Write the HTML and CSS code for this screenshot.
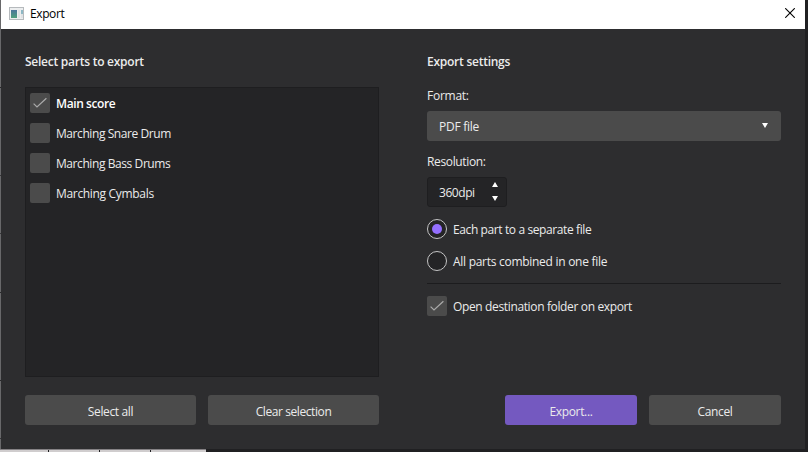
FILE: index.html
```html
<!DOCTYPE html>
<html lang="en">
<head>
<meta charset="utf-8">
<title>Export</title>
<link rel="stylesheet" href="styles.css">
</head>
<body>
<main class="dialog">
  <header class="titlebar">
    <svg class="app-icon" width="15" height="13" viewBox="0 0 15 13">
      <defs><linearGradient id="pane" x1="0" y1="0" x2="0" y2="1"><stop offset="0" stop-color="#4b759b"/><stop offset="1" stop-color="#4fa17c"/></linearGradient></defs>
      <rect x=".5" y=".5" width="14" height="12" fill="#eceeef" stroke="#b6babd"/>
      <rect x="2" y="3" width="6" height="8" fill="url(#pane)"/>
      <rect x="9" y="3" width="2" height="8" fill="#dfe2e4"/>
      <rect x="12" y="3" width="2" height="4" fill="#8db8c5"/>
      <rect x="12" y="7" width="2" height="4" fill="#dfe2e4"/>
    </svg>
    <span class="title">Export</span>
    <svg class="close" width="10" height="10" viewBox="0 0 10 10"><path d="M.2 .2 9.8 9.8M9.8 .2.2 9.8" stroke="#000" stroke-width="1.1"/></svg>
  </header>
  <div class="content">
    <section class="parts">
      <h2 class="parts-heading">Select parts to export</h2>
      <ul class="list">
        <li class="row"><span class="check"><svg width="20" height="20" viewBox="0 0 20 20"><path d="M3.6 10.6 7 14 16.4 5.2"/></svg></span><b class="text main-score">Main score</b></li>
        <li class="row"><span class="check"></span><span class="text tight">Marching Snare Drum</span></li>
        <li class="row"><span class="check"></span><span class="text tight">Marching Bass Drums</span></li>
        <li class="row"><span class="check"></span><span class="text cymbals">Marching Cymbals</span></li>
      </ul>
      <div class="buttons">
        <button class="btn wide"><span class="t-all">Select all</span></button>
        <button class="btn wide"><span class="t-clear">Clear selection</span></button>
      </div>
    </section>
    <section class="settings">
      <h2 class="settings-heading">Export settings</h2>
      <label class="label format">Format:</label>
      <div class="select"><span class="t-pdf">PDF file</span><svg width="6" height="5" viewBox="0 0 6 5"><path d="M0 0h6L3 5z"/></svg></div>
      <label class="label resolution">Resolution:</label>
      <div class="spin"><span class="t-dpi">360dpi</span><span class="arrows"><svg width="6" height="5" viewBox="0 0 6 5"><path d="M0 5h6L3 0z"/></svg><svg width="6" height="5" viewBox="0 0 6 5"><path d="M0 0h6L3 5z"/></svg></span></div>
      <div class="option"><span class="radio on"></span><span class="text t-each">Each part to a separate file</span></div>
      <div class="option second"><span class="radio"></span><span class="text t-combined">All parts combined in one file</span></div>
      <hr>
      <div class="option"><span class="check"><svg width="20" height="20" viewBox="0 0 20 20"><path d="M3.6 10.6 7 14 16.4 5.2"/></svg></span><span class="text t-open">Open destination folder on export</span></div>
      <div class="buttons right">
        <button class="btn primary"><span class="t-export">Export...</span></button>
        <button class="btn"><span class="t-cancel">Cancel</span></button>
      </div>
    </section>
  </div>
</main>
<footer class="behind"><i></i><i></i><i></i><i></i></footer>
</body>
</html>
```
FILE: styles.css
```css
* { box-sizing: border-box; }
body {
  margin: 0; width: 808px; height: 452px; overflow: hidden;
  background:
    linear-gradient(#68686a 0 87px, #29292b 87px 88px, #68686a 88px 175px, #38383a 175px 176px, #68686a 176px 233px, #38383a 233px 234px, #68686a 234px 292px, #29292b 292px 293px, #68686a 293px 380px, #29292b 380px 381px, #68686a 381px 438px, #38383a 438px 439px, #68686a 439px) 0 0 / 1px 100% no-repeat,
    #202022;
  font: 12px/20px "Open Sans", "Noto Sans", sans-serif; letter-spacing: -.25px; color: #ebebeb;
}
.dialog { width: 804px; height: 449px; margin-left: 1px; background: #2d2d2f; }
.titlebar { height: 29px; background: #fff; color: #000; display: flex; align-items: center; padding: 0 10px 3px 8px; }
.title { margin-left: 6px; padding-top: 2px; letter-spacing: -.4px; }
.close { margin-left: auto; }
.content { display: flex; gap: 48px; padding: 23px 24px 24px; height: 420px; }
.parts, .settings { width: 354px; display: flex; flex-direction: column; }
h2 { margin: 0; font-size: 12px; line-height: 20px; font-weight: 600; align-self: flex-start; }
.list { list-style: none; margin: 15px 0 0; padding: 5px 4px; height: 290px; border: 1px solid #1e1e20; background: #242426; }
.row, .option { display: flex; align-items: center; gap: 6px; height: 20px; }
.row { margin-bottom: 10px; }
.text { padding-top: 2px; }
b { font-weight: 600; color: #fff; }
.main-score { letter-spacing: -.4px; }
.tight { letter-spacing: -.42px; }
.cymbals { letter-spacing: -.32px; }
.t-all { letter-spacing: -.35px; }
.t-clear { letter-spacing: -.41px; }
.t-dpi { letter-spacing: -.45px; }
.t-each { letter-spacing: -.39px; }
.t-combined { letter-spacing: -.28px; }
.t-open { letter-spacing: -.36px; }
.t-export, .t-cancel { letter-spacing: -.35px; }
.check { width: 20px; height: 20px; border-radius: 2px; background: #4b4b4b; flex: none; }
.check svg { display: block; }
.check path { fill: none; stroke: #aaa; stroke-width: 1.2; }
.buttons { display: flex; gap: 12px; margin-top: 18px; }
.btn { width: 132px; height: 30px; border: 0; border-radius: 3px; background: #4b4b4b; color: #ebebeb; font: inherit; letter-spacing: inherit; padding: 3px 0 0; }
.btn.wide { width: 171px; }
.btn.primary { background: #7459c0; }
.label { align-self: flex-start; height: 20px; }
.format { margin-top: 14px; }
.select { height: 30px; margin-top: 5px; padding: 0 13px 0 12px; border-radius: 3px; background: #4b4b4b; display: flex; justify-content: space-between; align-items: center; }
.t-pdf { padding-top: 2px; }
.select svg { margin-bottom: 1px; }
.select svg, .arrows svg { fill: #fff; display: block; }
.resolution { margin-top: 11px; letter-spacing: -.35px; }
.spin { width: 80px; height: 30px; margin-top: 5px; padding: 0 8px 0 11px; border: 1px solid #1e1e20; border-radius: 3px; background: #242426; display: flex; align-items: center; justify-content: space-between; }
.t-dpi { padding-top: 2px; }
.arrows { display: grid; gap: 9px; margin-bottom: 1px; }
.spin + .option { margin-top: 12px; }
.second { margin-top: 12px; }
.radio { width: 20px; height: 20px; border: 1px solid #c4c4c5; border-radius: 50%; background: #242426; display: grid; place-items: center; flex: none; }
.radio.on::before { content: ""; width: 10px; height: 10px; border-radius: 50%; background: #946fff; }
hr { width: 100%; height: 1px; border: 0; background: #1c1c1e; margin: 12px 0; }
.right { margin-top: auto; justify-content: flex-end; }
.behind { width: 206px; height: 3px; display: grid; grid-template-columns: 48px 50px 50px 1fr; gap: 1px; border-top: 1px solid #858285; }
.behind i { background: #d0cdce; }
```
